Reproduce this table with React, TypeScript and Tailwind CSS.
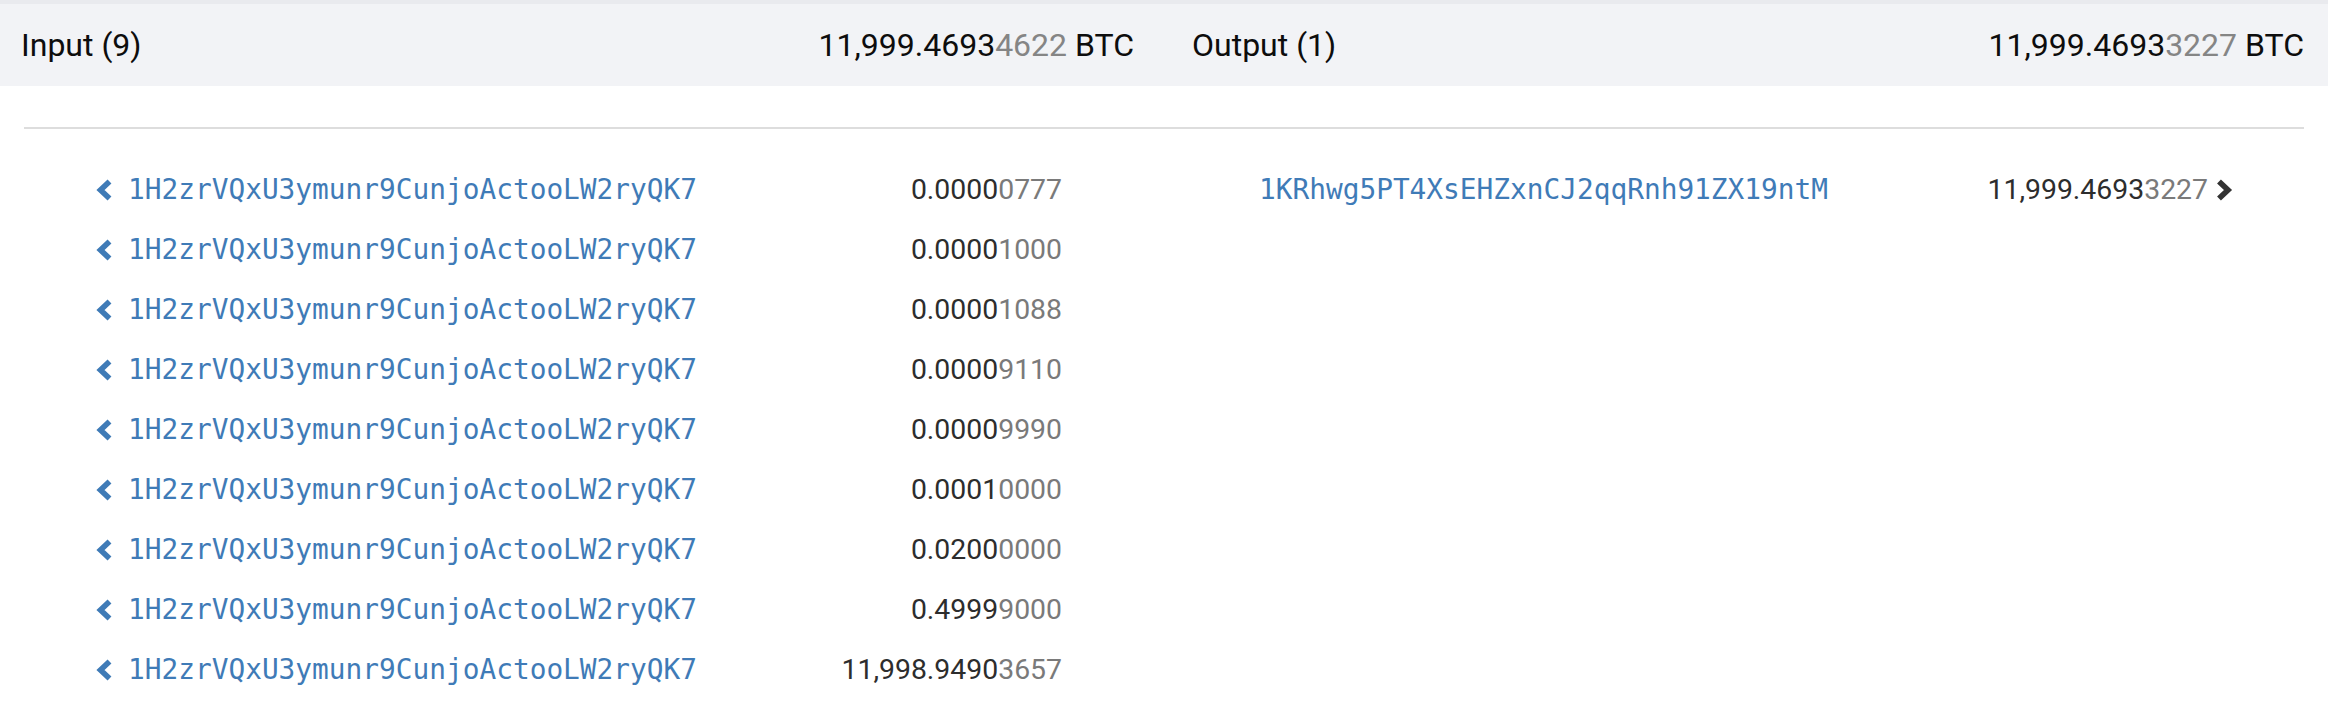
import React from 'react'

const INPUT_ADDR = '1H2zrVQxU3ymunr9CunjoActooLW2ryQK7'

const INPUTS = [
  '0.00000777',
  '0.00001000',
  '0.00001088',
  '0.00009110',
  '0.00009990',
  '0.00010000',
  '0.02000000',
  '0.49999000',
  '11,998.94903657',
]

const OUTPUTS = [{ addr: '1KRhwg5PT4XsEHZxnCJ2qqRnh91ZX19ntM', value: '11,999.46933227' }]

// last 4 decimals are shown dimmed
function Amount({ value, dark, dim }: { value: string; dark: string; dim: string }) {
  const head = value.slice(0, -4)
  const tail = value.slice(-4)
  return (
    <span className="whitespace-nowrap">
      <span className={dark}>{head}</span>
      <span className={dim}>{tail}</span>
    </span>
  )
}

function ChevronLeft() {
  return (
    <svg width="18" height="24" viewBox="0 0 18 24" className="shrink-0">
      <polyline points="14.5,3.5 5.5,12 14.5,20.5" fill="none" stroke="#3f7bb7" strokeWidth="5.6" strokeLinejoin="miter" />
    </svg>
  )
}

function ChevronRight() {
  return (
    <svg width="20" height="24" viewBox="0 0 20 24" className="shrink-0">
      <polyline points="5,3.5 14,12 5,20.5" fill="none" stroke="#333333" strokeWidth="5.6" strokeLinejoin="miter" />
    </svg>
  )
}

function Address({ text }: { text: string }) {
  return (
    <span className="font-['DejaVu_Sans_Mono',monospace] text-[27.8px] leading-none text-[#3f7bb7] whitespace-nowrap">
      {text}
    </span>
  )
}

export default function App() {
  return (
    <div className="min-h-[724px] w-[2328px] bg-white font-['Roboto',sans-serif]">
      {/* header band */}
      <div className="flex h-[86px] items-center border-t-4 border-[#e9eaee] bg-[#f2f3f6] pl-[21px] pr-[24px] text-[32px] text-[#0d0d0d]">
        <div className="flex w-[1113px] items-center justify-between">
          <span>Input (9)</span>
          <span>
            <Amount value="11,999.46934622" dark="text-[#0d0d0d]" dim="text-[#858585]" /> BTC
          </span>
        </div>
        <div className="ml-[58px] flex flex-1 items-center justify-between">
          <span>Output (1)</span>
          <span>
            <Amount value="11,999.46933227" dark="text-[#0d0d0d]" dim="text-[#858585]" /> BTC
          </span>
        </div>
      </div>

      <div className="mx-[24px] mt-[41px] border-t-2 border-[#dddddd]" />

      <div className="flex pt-[31px] text-[28.4px]">
        <div className="ml-[95px] flex w-[967px] flex-col">
          {INPUTS.map((v, i) => (
            <div key={i} className="flex h-[60px] items-center">
              <ChevronLeft />
              <div className="ml-[15px] flex-1">
                <Address text={INPUT_ADDR} />
              </div>
              <Amount value={v} dark="text-[#2d2d2d]" dim="text-[#7a7a7a]" />
            </div>
          ))}
        </div>
        <div className="ml-[197px] flex w-[975px] flex-col">
          {OUTPUTS.map((o, i) => (
            <div key={i} className="flex h-[60px] items-center">
              <div className="flex-1">
                <Address text={o.addr} />
              </div>
              <Amount value={o.value} dark="text-[#2d2d2d]" dim="text-[#7a7a7a]" />
              <div className="ml-[6px]">
                <ChevronRight />
              </div>
            </div>
          ))}
        </div>
      </div>
    </div>
  )
}
